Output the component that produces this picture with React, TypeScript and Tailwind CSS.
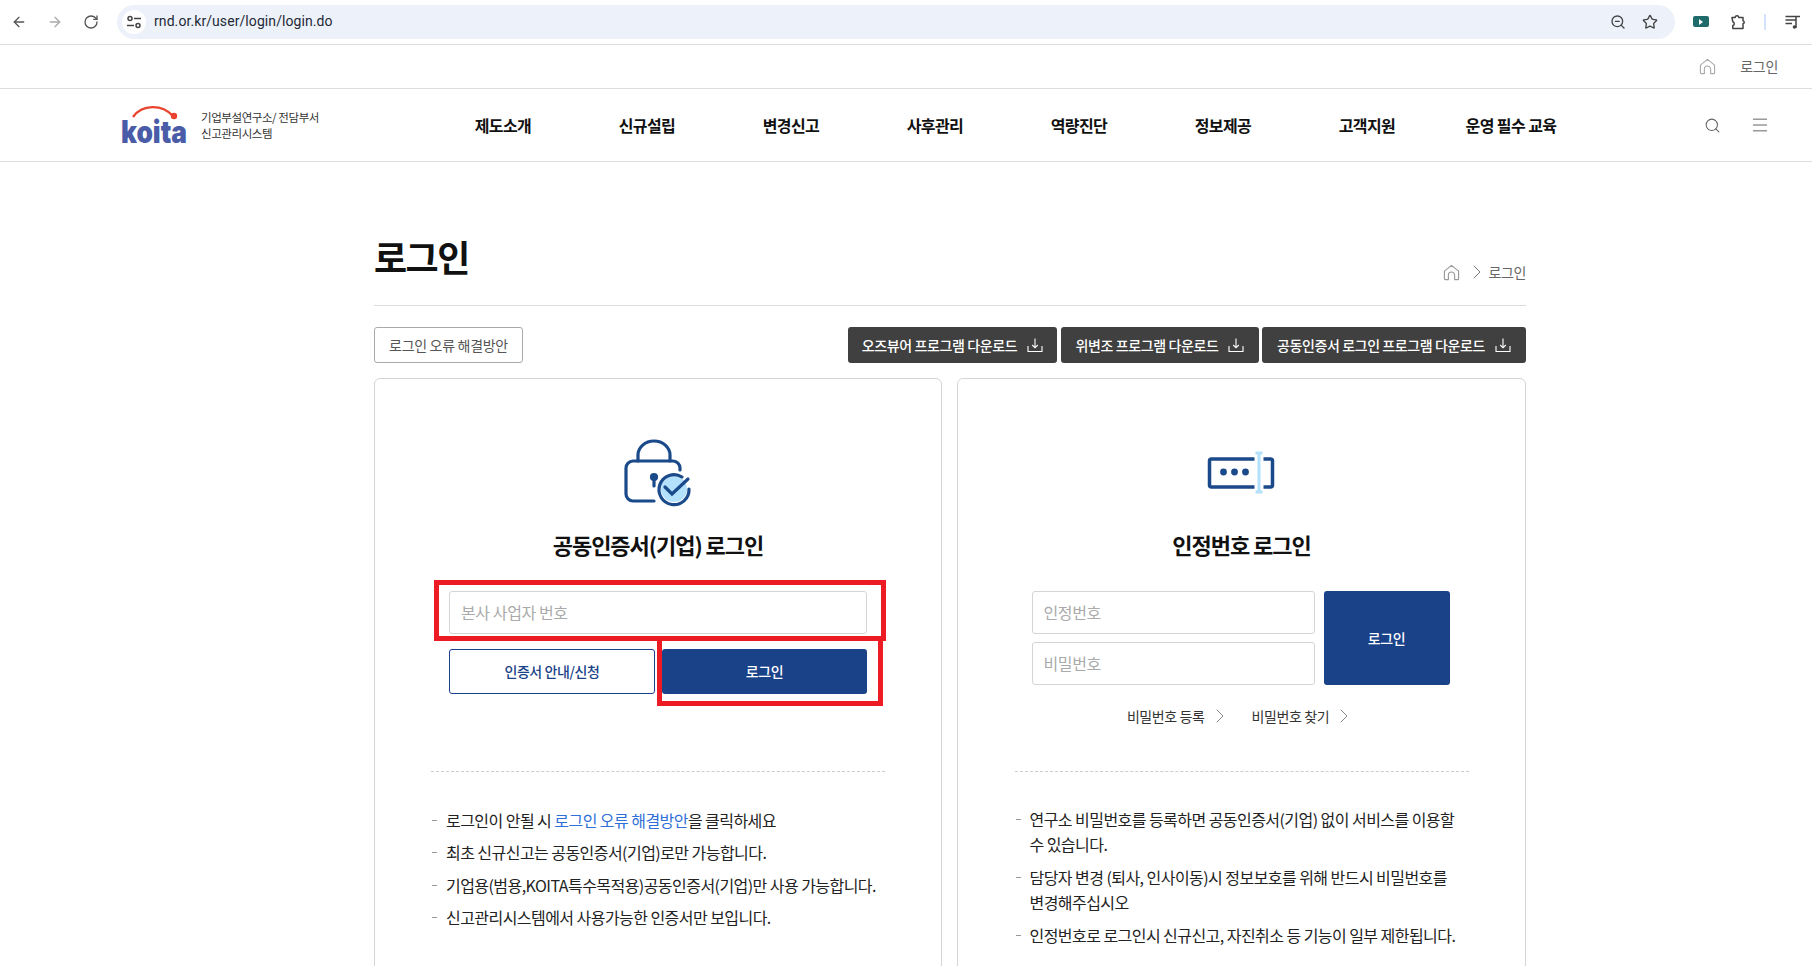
import React from "react";
import { ArrowLeft, ArrowRight, RotateCw, ZoomOut, Star, Search, Menu, ChevronRight } from "lucide-react";

const navItems = ["제도소개", "신규설립", "변경신고", "사후관리", "역량진단", "정보제공", "고객지원", "운영 필수 교육"];

const leftNotes = [
  "최초 신규신고는 공동인증서(기업)로만 가능합니다.",
  "기업용(범용,KOITA특수목적용)공동인증서(기업)만 사용 가능합니다.",
  "신고관리시스템에서 사용가능한 인증서만 보입니다.",
];

const rightNotes = [
  "연구소 비밀번호를 등록하면 공동인증서(기업) 없이 서비스를 이용할 수 있습니다.",
  "담당자 변경 (퇴사, 인사이동)시 정보보호를 위해 반드시 비밀번호를 변경해주십시오",
  "인정번호로 로그인시 신규신고, 자진취소 등 기능이 일부 제한됩니다.",
];

function HomeIcon({ className }: { className?: string }) {
  return (
    <svg viewBox="0 0 18 18" fill="none" stroke="currentColor" strokeWidth="1.2" className={className}>
      <path d="M1.5 7.5 9 1.5l7.5 6v8a1 1 0 0 1-1 1h-3.2v-4.7a3.3 3.3 0 0 0-6.6 0v4.7H2.5a1 1 0 0 1-1-1z" strokeLinejoin="round" />
    </svg>
  );
}

function DownloadIcon() {
  return (
    <svg viewBox="0 0 16 16" fill="none" stroke="currentColor" strokeWidth="1.1" className="w-4 h-4 shrink-0">
      <path d="M1 9v5.5h14V9M8 1.5v9M5.2 8 8 10.8 10.8 8" />
    </svg>
  );
}

// site settings glyph in the address bar
function TuneIcon() {
  return (
    <svg viewBox="0 0 16 16" fill="none" stroke="#444" strokeWidth="1.5" className="w-4 h-4">
      <circle cx="4" cy="4.5" r="2" />
      <path d="M8 4.5h7M1 11.5h7" />
      <circle cx="12" cy="11.5" r="2" />
    </svg>
  );
}

function ExtensionIcon() {
  return (
    <svg viewBox="0 0 16 16" fill="none" stroke="#444" strokeWidth="1.5" strokeLinejoin="round" className="w-4 h-4">
      <path d="M2 3.5h3.2a1.8 1.8 0 0 1 3.6 0H13v3.2a1.6 1.6 0 0 1 0 3.1V14.5H2.8v-3a1.9 1.9 0 0 0 0-3.7z" />
    </svg>
  );
}

function QueueIcon() {
  return (
    <svg viewBox="0 0 16 16" fill="none" stroke="#444" strokeWidth="1.5" className="w-4 h-4">
      <path d="M0.5 2.5h10M0.5 6h10M0.5 9.5h6.5M11 14V2.5h4" />
      <circle cx="9.5" cy="13" r="1.8" fill="#444" stroke="none" />
    </svg>
  );
}

function KoitaLogo() {
  return (
    <svg viewBox="120 98 90 52" className="w-[90px] h-[52px] shrink-0">
      <path d="M133 116c9-13 29-13 40-1" fill="none" stroke="#e8432e" strokeWidth="2.4" />
      <circle cx="174" cy="115" r="3.2" fill="#e8432e" />
      <text x="121" y="142" textLength="66" lengthAdjust="spacingAndGlyphs" fontFamily="Inter, sans-serif" fontWeight="900" fontSize="31" fill="#4a5ca8">
        koita
      </text>
    </svg>
  );
}

function LockIcon() {
  return (
    <svg viewBox="608 430 100 80" className="w-[100px] h-20" fill="none" stroke="#1b4a8a" strokeWidth="3.2" strokeLinecap="round">
      <path d="M638 461v-6a16 14 0 0 1 32 0v6" />
      <path d="M680 470v-2a7 7 0 0 0-7-7h-40a7 7 0 0 0-7 7v26a7 7 0 0 0 7 7h21" />
      <circle cx="654" cy="477" r="2.5" fill="#1b4a8a" />
      <path d="M654 479v7" />
      <circle cx="674" cy="489" r="13" fill="#b3e0fa" stroke="none" />
      <path d="M682 477a15 15 0 1 0 7 12" />
      <path d="M665 487l7 7 16-15" />
    </svg>
  );
}

function NumberIcon() {
  return (
    <svg viewBox="1201.5 430 80 80" className="w-20 h-20" fill="none">
      <path d="M1254 459h-43a2 2 0 0 0-2 2v24a2 2 0 0 0 2 2h43M1263 459h7a2 2 0 0 1 2 2v24a2 2 0 0 1-2 2h-7" stroke="#1b4a8a" strokeWidth="3.5" />
      <circle cx="1223" cy="472" r="3.4" fill="#1b4a8a" />
      <circle cx="1234" cy="472" r="3.4" fill="#1b4a8a" />
      <circle cx="1245" cy="472" r="3.4" fill="#1b4a8a" />
      <path d="M1258.5 453v39M1255 453h7M1255 492h7" stroke="#b3e0fa" strokeWidth="3" />
    </svg>
  );
}

function Note({ children }: { children: React.ReactNode }) {
  return (
    <li className="relative pl-[14px] text-[16px] leading-[25px] tracking-[-0.55px] break-keep text-[#222]">
      <span className="absolute left-0 top-[12px] w-[5px] h-px bg-[#999]" />
      {children}
    </li>
  );
}

function TextField({ placeholder }: { placeholder: string }) {
  return (
    <input
      placeholder={placeholder}
      className="w-full h-[43px] border border-[#d5d5d5] rounded-[3px] px-[11px] pb-[2px] text-[16px] tracking-[-0.4px] outline-none placeholder:text-[#aaa]"
    />
  );
}

export default function App() {
  return (
    <div className="h-screen overflow-hidden bg-white text-[#222] font-['Noto_Sans_CJK_KR','Noto_Sans',sans-serif]">
      {/* browser toolbar */}
      <div className="h-[45px] border-b border-[#dedede] flex items-center pb-px">
        <div className="flex items-center w-[117px] pl-[11px] gap-5 text-[#555]">
          <ArrowLeft className="w-4 h-4" strokeWidth={2} />
          <ArrowRight className="w-4 h-4 text-[#aaa]" strokeWidth={2} />
          <RotateCw className="w-4 h-4" strokeWidth={2} />
        </div>
        <div className="w-[1558px] h-[34px] rounded-full bg-[#edf2fa] flex items-center pl-[5px] pr-[17px]">
          <span className="w-6 h-6 rounded-full bg-white flex items-center justify-center">
            <TuneIcon />
          </span>
          <span className="ml-2 text-[14px] tracking-[0.08px] text-[#1f2937] font-['Roboto',sans-serif]">rnd.or.kr/user/login/login.do</span>
          <ZoomOut className="ml-auto w-4 h-4 text-[#444]" />
          <Star className="ml-4 w-4 h-4 text-[#444]" />
        </div>
        <div className="flex items-center pl-[18px] text-[#444]">
          <span className="w-4 h-[11px] rounded-[2px] bg-[#1f6b6b] flex items-center justify-center">
            <span className="w-0 h-0 border-y-[3px] border-y-transparent border-l-[4px] border-l-white" />
          </span>
          <span className="ml-[21px]">
            <ExtensionIcon />
          </span>
          <span className="ml-[18px] w-0.5 h-4 bg-[#d3e3fd]" />
          <span className="ml-[19px]">
            <QueueIcon />
          </span>
        </div>
      </div>

      {/* utility bar */}
      <div className="h-[44px] border-b border-[#ddd] flex items-center justify-end pr-[34px]">
        <HomeIcon className="w-[17px] h-[17px] text-[#aaa]" />
        <span className="ml-[24px] text-[14px] text-[#666] tracking-[-0.3px]">로그인</span>
      </div>

      {/* site header */}
      <header className="h-[73px] border-b border-[#ddd] flex items-center pl-[120px]">
        <KoitaLogo />
        <div className="ml-[-9px] w-[230px] -mt-px text-[11.5px] leading-4 tracking-[-0.42px] text-[#333]">
          기업부설연구소/ 전담부서
          <br />
          신고관리시스템
        </div>
        <nav className="grid grid-cols-8 w-[1152px]">
          {navItems.map((item) => (
            <span key={item} className="text-center text-[16px] font-bold tracking-[-0.6px] text-[#111]">
              {item}
            </span>
          ))}
        </nav>
        <div className="ml-[121px] flex items-center text-[#666]">
          <Search className="w-[17px] h-[17px]" strokeWidth={1.5} />
          <Menu className="ml-[29px] w-[20px] h-[20px]" strokeWidth={1.2} />
        </div>
      </header>

      <main className="ml-[374px] w-[1152px]">
        {/* title */}
        <div className="h-[144px] border-b border-[#ddd] flex justify-between">
          <h1 className="mt-[74px] h-10 leading-10 text-[36px] font-bold tracking-[-1.5px] text-[#111]">로그인</h1>
          <div className="mt-[100px] h-5 flex items-center text-[#777]">
            <HomeIcon className="w-[17px] h-[17px] text-[#999]" />
            <ChevronRight className="w-6 h-6 ml-[5px]" strokeWidth={1} />
            <span className="text-[14px] tracking-[-0.4px] text-[#666]">로그인</span>
          </div>
        </div>

        {/* top buttons */}
        <div className="mt-[21px] flex h-9">
          <button className="w-[149px] border border-[#aaa] rounded-[3px] text-[14px] tracking-[-0.3px] text-[#555]">
            로그인 오류 해결방안
          </button>
          <div className="ml-auto flex">
            <button className="w-[209px] mr-1 rounded-[3px] bg-[#404040] text-white text-[14px] font-medium tracking-[-0.4px] flex items-center justify-center gap-[10px]">
              오즈뷰어 프로그램 다운로드 <DownloadIcon />
            </button>
            <button className="w-[198px] mr-[3px] rounded-[3px] bg-[#404040] text-white text-[14px] font-medium tracking-[-0.4px] flex items-center justify-center gap-[10px]">
              위변조 프로그램 다운로드 <DownloadIcon />
            </button>
            <button className="w-[264px] rounded-[3px] bg-[#404040] text-white text-[14px] font-medium tracking-[-0.4px] flex items-center justify-center gap-[10px]">
              공동인증서 로그인 프로그램 다운로드 <DownloadIcon />
            </button>
          </div>
        </div>

        {/* login cards */}
        <div className="mt-[15px] flex gap-[15px]">
          <section className="w-[568px] h-[700px] border border-[#d5d5d5] rounded-[6px] flex flex-col items-center pt-[51px]">
            <LockIcon />
            <h2 className="mt-[19px] h-[30px] leading-[30px] text-[22px] font-bold tracking-[-1.05px] text-[#111]">공동인증서(기업) 로그인</h2>
            <div className="relative mt-8 w-[418px]">
              <TextField placeholder="본사 사업자 번호" />
              <div className="mt-[15px] flex gap-[7px] h-[45px]">
                <button className="w-[206px] border border-[#1a4288] rounded-[3px] text-[14px] font-medium tracking-[-0.4px] text-[#1a4288]">
                  인증서 안내/신청
                </button>
                <button className="w-[205px] rounded-[3px] bg-[#1a4288] text-white text-[14px] font-medium tracking-[-0.4px]">
                  로그인
                </button>
              </div>
              {/* red annotation boxes */}
              <span className="absolute left-[-15px] top-[-11px] w-[452px] h-[61px] border-[5px] border-[#ed1c24]" />
              <span className="absolute left-[208px] top-[50px] w-[226px] h-[65px] border-[5px] border-t-0 border-[#ed1c24]" />
            </div>
            <div className="mt-[77px] w-[454px] border-t border-dashed border-[#ccc]" />
            <ul className="mt-[36px] w-[454px] pl-px flex flex-col gap-[7.4px]">
              <Note>
                로그인이 안될 시 <span className="text-[#2f6fd8]">로그인 오류 해결방안</span>을 클릭하세요
              </Note>
              {leftNotes.map((note) => (
                <Note key={note}>{note}</Note>
              ))}
            </ul>
          </section>

          <section className="w-[569px] h-[700px] border border-[#d5d5d5] rounded-[6px] flex flex-col items-center pt-[51px]">
            <NumberIcon />
            <h2 className="mt-[19px] h-[30px] leading-[30px] text-[22px] font-bold tracking-[-1.05px] text-[#111]">인정번호 로그인</h2>
            <div className="mt-8 w-[418px] -translate-x-px flex gap-[9px]">
              <div className="w-[283px] flex flex-col gap-2">
                <TextField placeholder="인정번호" />
                <TextField placeholder="비밀번호" />
              </div>
              <button className="w-[126px] rounded-[3px] bg-[#1a4288] text-white text-[14px] font-medium tracking-[-0.4px]">로그인</button>
            </div>
            <div className="mt-[19px] h-6 flex items-center text-[14px] tracking-[-0.4px] text-[#333]">
              <span>비밀번호 등록</span>
              <ChevronRight className="ml-[3px] w-6 h-6 text-[#888]" strokeWidth={1} />
              <span className="ml-[20px]">비밀번호 찾기</span>
              <ChevronRight className="ml-[3px] w-6 h-6 text-[#888]" strokeWidth={1} />
            </div>
            <div className="mt-[43px] w-[454px] border-t border-dashed border-[#ccc]" />
            <ul className="mt-[35px] w-[454px] pl-px flex flex-col gap-2">
              {rightNotes.map((note) => (
                <Note key={note}>{note}</Note>
              ))}
            </ul>
          </section>
        </div>
      </main>
    </div>
  );
}
